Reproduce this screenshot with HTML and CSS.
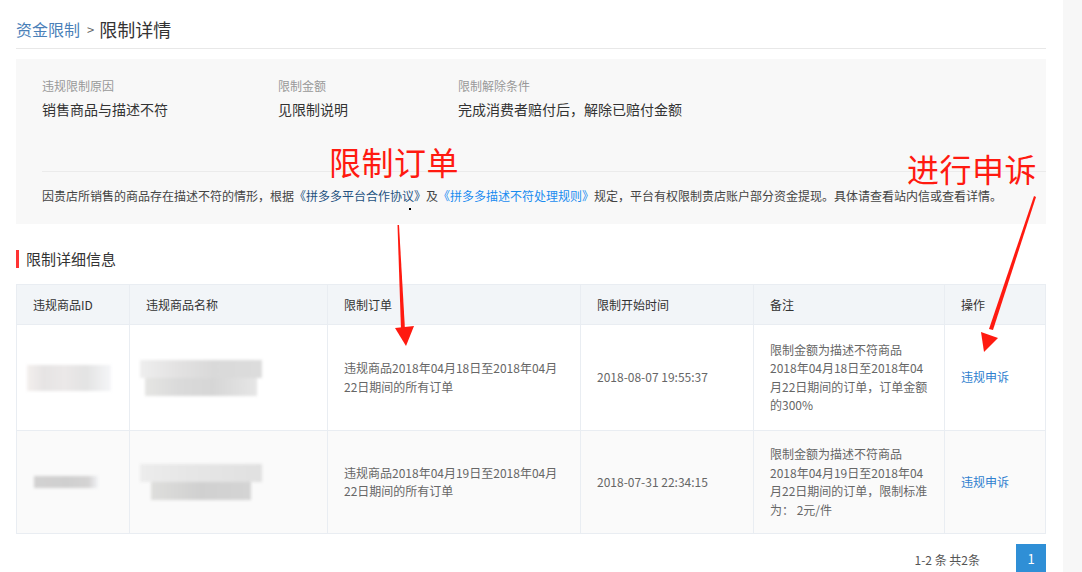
FILE: index.html
```html
<!DOCTYPE html>
<html lang="zh-CN">
<head>
  <meta charset="UTF-8" />
  <title>限制详情</title>
  <link rel="stylesheet" href="styles.css">
</head>
<body>
  <div class="page">
    <div class="main">
      <div class="crumb">
        <a class="crumb-link" href="#">资金限制</a>
        <span class="crumb-sep">&gt;</span>
        <span class="crumb-cur">限制详情</span>
      </div>

      <div class="summary">
        <div class="facts">
          <div class="fact fact-reason">
            <div class="fact-label">违规限制原因</div>
            <div class="fact-value">销售商品与描述不符</div>
          </div>
          <div class="fact fact-amount">
            <div class="fact-label">限制金额</div>
            <div class="fact-value">见限制说明</div>
          </div>
          <div class="fact">
            <div class="fact-label">限制解除条件</div>
            <div class="fact-value">完成消费者赔付后，解除已赔付金额</div>
          </div>
        </div>
        <p class="notice">因贵店所销售的商品存在描述不符的情形，根据<a class="visited" href="#">《拼多多平台合作协议》</a>及<a href="#">《拼多多描述不符处理规则》</a>规定，平台有权限制贵店账户部分资金提现。具体请查看站内信或查看详情。</p>
      </div>

      <h3 class="section-title">限制详细信息</h3>

      <table class="grid">
        <colgroup>
          <col style="width:113px">
          <col style="width:198px">
          <col style="width:253px">
          <col style="width:173px">
          <col style="width:191px">
          <col>
        </colgroup>
        <thead>
          <tr>
            <th>违规商品ID</th>
            <th>违规商品名称</th>
            <th>限制订单</th>
            <th>限制开始时间</th>
            <th>备注</th>
            <th>操作</th>
          </tr>
        </thead>
        <tbody>
          <tr class="row-a">
            <td class="cell-img"><div class="blur blur-id"></div></td>
            <td class="cell-img"><div class="blur blur-name"></div></td>
            <td>违规商品2018年04月18日至2018年04月<br>22日期间的所有订单</td>
            <td>2018-08-07 19:55:37</td>
            <td>限制金额为描述不符商品<br>2018年04月18日至2018年04<br>月22日期间的订单，订单金额<br>的300%</td>
            <td><a href="#">违规申诉</a></td>
          </tr>
          <tr class="row-b">
            <td class="cell-img"><div class="blur blur-id2"></div></td>
            <td class="cell-img"><div class="blur blur-name2"></div></td>
            <td>违规商品2018年04月19日至2018年04月<br>22日期间的所有订单</td>
            <td>2018-07-31 22:34:15</td>
            <td>限制金额为描述不符商品<br>2018年04月19日至2018年04<br>月22日期间的订单，限制标准<br>为： 2元/件</td>
            <td><a href="#">违规申诉</a></td>
          </tr>
        </tbody>
      </table>

      <div class="pager">
        <span class="pager-total">1-2 条 共2条</span>
        <span class="pager-btn">1</span>
      </div>
    </div>
    <div class="gutter"></div>

    <!-- annotations drawn on top of the screenshot -->
    <div class="note note-order">限制订单</div>
    <div class="note note-appeal">进行申诉</div>
    <svg class="arrows" width="1082" height="572" viewBox="0 0 1082 572">
      <polygon fill="#ff1a10" points="397.5,225 399,225 405,330 401,330" />
      <polygon fill="#ff1a10" points="395,328 414,326 406,346" />
      <polygon fill="#ff1a10" points="1034,196 1036,197 993,330 989,329" />
      <polygon fill="#ff1a10" points="981,332 998,338 984,352" />
      <rect x="409" y="208" width="2" height="2" fill="#000" />
    </svg>
  </div>
</body>
</html>
```

FILE: styles.css
```css
body {
  margin: 0;
  font-family: "Noto Sans CJK SC", "Microsoft YaHei", sans-serif;
  color: #333;
  background: #fff;
}

a {
  text-decoration: none;
}

.page {
  position: relative;
  display: flex;
  min-height: 572px;
  overflow: hidden;
}

.main {
  width: 1030px;
  margin-left: 16px;
}

.gutter {
  margin-left: auto;
  width: 19px;
  background: #f7f7f7;
}

/* breadcrumb */
.crumb {
  display: flex;
  align-items: center;
  height: 24px;
  padding: 17px 0 7px;
  border-bottom: 1px solid #e8e8e8;
}

.crumb-link {
  font-size: 16px;
  color: #4a80b8;
}

.crumb-sep {
  font-size: 13px;
  color: #666;
  margin: 0 5px 0 7px;
}

.crumb-cur {
  font-size: 18px;
  color: #333;
}

/* summary box */
.summary {
  margin-top: 10px;
  background: #f8f8f8;
  padding: 18px 0 18px 26px;
}

.facts {
  display: flex;
}

.fact-reason {
  width: 236px;
}

.fact-amount {
  width: 180px;
}

.fact-label {
  font-size: 12px;
  line-height: 18px;
  height: 18px;
  color: #999;
}

.fact-value {
  margin-top: 4px;
  font-size: 14px;
  line-height: 20px;
  height: 20px;
  color: #333;
}

.notice {
  margin: 52px 0 0;
  padding-top: 14px;
  border-top: 1px solid #ebebeb;
  font-size: 12px;
  line-height: 20px;
  height: 20px;
  color: #444;
}

.notice a {
  color: #1a8cf0;
}

.notice a.visited {
  color: #24527f;
}

/* section title */
.section-title {
  margin: 26px 0 0;
  padding-left: 7px;
  border-left: 3px solid #f33;
  font-size: 15px;
  font-weight: normal;
  line-height: 18px;
  height: 18px;
  color: #333;
}

/* table */
.grid {
  margin-top: 16px;
  width: 1030px;
  table-layout: fixed;
  border-collapse: collapse;
  font-size: 12px;
}

.grid th,
.grid td {
  border: 1px solid #e9edf2;
  padding: 0 16px;
  text-align: left;
  vertical-align: middle;
}

.grid th {
  height: 39px;
  background: #f2f5f8;
  font-weight: normal;
  color: #333;
}

.grid td {
  color: #666;
  line-height: 18.5px;
}

.row-a td {
  height: 105px;
  background: #fff;
}

.row-b td {
  height: 102px;
  background: #fafafa;
}

.grid td a {
  color: #2f7fcf;
}

.cell-img {
  padding: 0 !important;
}

.blur {
  filter: blur(1.5px);
}

.blur-id {
  margin-left: 10px;
  width: 84px;
  height: 26px;
  background: linear-gradient(90deg, #f3efed 0%, #e6e4e4 20%, #ebe8e8 45%, #e3e3e3 70%, #f5f6f8 100%);
}

.blur-name {
  margin-left: 10px;
  width: 122px;
  height: 36px;
  background:
    linear-gradient(90deg, #eeeeee 0%, #e3e2e2 30%, #d9d9d9 60%, #dcdcdc 100%) top / 100% 50% no-repeat,
    linear-gradient(90deg, #e5e5e3 0%, #dadada 30%, #d6d6d6 60%, #e6e6e6 100%) bottom / 92% 50% no-repeat;
}

.blur-id2 {
  margin-left: 17px;
  width: 64px;
  height: 12px;
  background: linear-gradient(90deg, #d2d1d1 0%, #cfcfcf 50%, #d4d3d3 85%, #f1f2f5 100%);
}

.blur-name2 {
  margin-left: 10px;
  width: 122px;
  height: 36px;
  background:
    linear-gradient(90deg, #ececec 0%, #e6e6e6 40%, #e0e0e0 100%) top / 100% 50% no-repeat,
    linear-gradient(90deg, #dededc 0%, #d0d0d0 50%, #d4d4d4 100%) bottom / 82% 50% no-repeat;
}

/* pager */
.pager {
  margin-top: 10px;
  display: flex;
  justify-content: flex-end;
  align-items: center;
}

.pager-total {
  font-size: 12px;
  color: #555;
  margin-right: 36px;
}

.pager-btn {
  width: 30px;
  height: 30px;
  line-height: 30px;
  text-align: center;
  background: #2f8fd6;
  color: #fff;
  font-size: 13px;
}

/* annotations */
.note {
  position: absolute;
  font-size: 32px;
  line-height: 40px;
  color: #ff1a10;
  letter-spacing: 0.5px;
}

.note-order {
  left: 329px;
  top: 141px;
}

.note-appeal {
  left: 907px;
  top: 148px;
}

.arrows {
  position: absolute;
  left: 0;
  top: 0;
  pointer-events: none;
}
```
